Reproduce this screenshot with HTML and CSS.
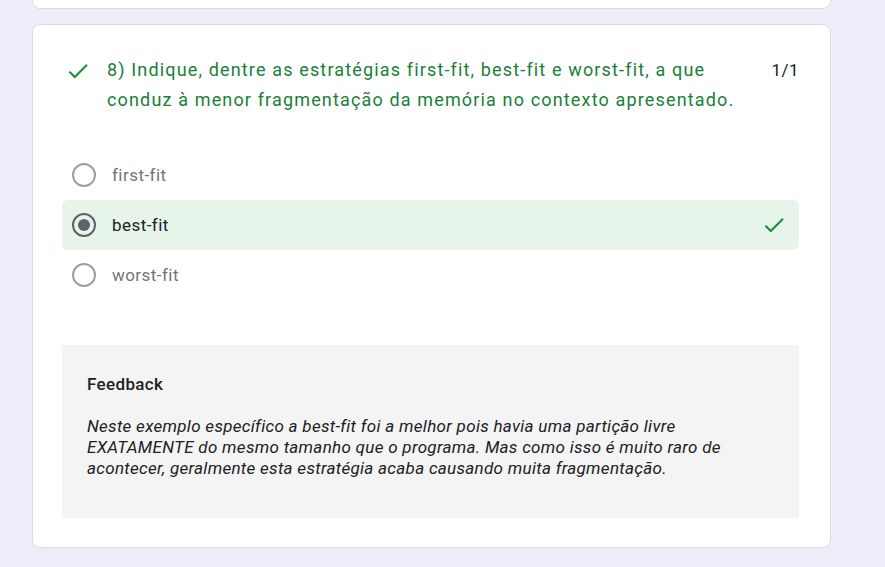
FILE: index.html
```html
<!DOCTYPE html>
<html lang="pt">
<head>
<meta charset="utf-8">
<link rel="stylesheet" href="styles.css">
</head>
<body>
<div class="page">
  <div class="card card-prev"></div>
  <div class="card">
    <div class="q-head">
      <svg class="q-check" viewBox="0 0 24 24" width="24" height="24"><path d="M9 16.17L4.83 12l-1.42 1.41L9 19 21 7l-1.41-1.41z"/></svg>
      <div class="q-title">8) Indique, dentre as estratégias first-fit, best-fit e worst-fit, a que conduz à menor fragmentação da memória no contexto apresentado.</div>
      <div class="q-score">1/1</div>
    </div>
    <div class="options">
      <div class="opt">
        <span class="radio"></span>
        <span class="opt-label">first-fit</span>
      </div>
      <div class="opt opt-correct">
        <span class="radio radio-on"><span class="dot"></span></span>
        <span class="opt-label">best-fit</span>
        <svg class="opt-check" viewBox="0 0 24 24" width="24" height="24"><path d="M9 16.17L4.83 12l-1.42 1.41L9 19 21 7l-1.41-1.41z"/></svg>
      </div>
      <div class="opt">
        <span class="radio"></span>
        <span class="opt-label">worst-fit</span>
      </div>
    </div>
    <div class="feedback">
      <div class="fb-title">Feedback</div>
      <div class="fb-text">Neste exemplo específico a best-fit foi a melhor pois havia uma partição livre EXATAMENTE do mesmo tamanho que o programa. Mas como isso é muito raro de acontecer, geralmente esta estratégia acaba causando muita fragmentação.</div>
    </div>
  </div>
</div>
</body>
</html>
```

FILE: styles.css
```css
* { box-sizing: border-box; }
html, body {
  margin: 0;
  padding: 0;
  background: #f0ebf8;
  font-family: Roboto, "Liberation Sans", Arial, sans-serif;
  color: #202124;
}
.page {
  display: flex;
  flex-direction: column;
  gap: 15px;
  padding-left: 32px;
  width: 831px;
}
.card {
  background: #fff;
  border: 1px solid #dadce0;
  border-radius: 8px;
  padding: 30px 31px 29px 29px;
}
.card-prev {
  height: 9px;
  padding: 0;
  border-top: 0;
  border-radius: 0 0 8px 8px;
}
.q-head {
  display: flex;
  align-items: flex-start;
}
.q-check {
  fill: #1e8e3e;
  flex: none;
  width: 26px;
  height: 26px;
  margin: 3px 0 0 3px;
}
.q-title {
  flex: 1;
  margin-left: 16px;
  color: #188038;
  font-size: 18px;
  line-height: 30px;
  letter-spacing: 1.15px;
  padding-right: 16px;
}
.q-score {
  flex: none;
  font-size: 17px;
  line-height: 30px;
  color: #202124;
  letter-spacing: 0.5px;
}
.options {
  margin-top: 35px;
  display: flex;
  flex-direction: column;
}
.opt {
  display: flex;
  align-items: center;
  height: 50px;
  padding: 0 12px 0 10px;
  border-radius: 6px;
}
.opt-correct {
  background: #e6f4ea;
}
.radio {
  flex: none;
  width: 24px;
  height: 24px;
  border: 2px solid #9aa0a6;
  border-radius: 50%;
  display: flex;
  align-items: center;
  justify-content: center;
}
.radio-on {
  border-color: #5f6368;
}
.dot {
  width: 12px;
  height: 12px;
  border-radius: 50%;
  background: #5f6368;
}
.opt-label {
  flex: 1;
  margin-left: 16px;
  font-size: 17px;
  color: #70757a;
  letter-spacing: 0.45px;
}
.opt-correct .opt-label {
  color: #202124;
}
.opt-check {
  flex: none;
  fill: #1e8e3e;
  width: 26px;
  height: 26px;
}
.feedback {
  margin-top: 45px;
  background: #f4f4f4;
  padding: 27px 25px 39px 25px;
}
.fb-title {
  font-size: 17px;
  font-weight: 500;
  line-height: 24px;
  letter-spacing: 0.35px;
}
.fb-text {
  margin-top: 20px;
  font-size: 17px;
  font-style: italic;
  line-height: 21px;
  letter-spacing: 0.3px;
  width: 680px;
}
```
